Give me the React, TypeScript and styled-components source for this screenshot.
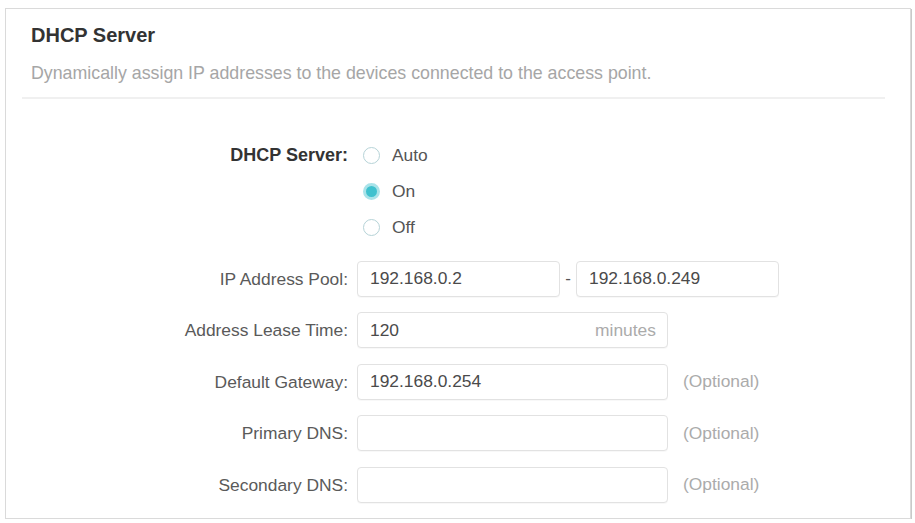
import React from "react";
import styled, { createGlobalStyle } from "styled-components";

const GlobalStyle = createGlobalStyle`
  html, body {
    margin: 0;
    padding: 0;
    background: #ffffff;
  }
  body {
    font-family: "Liberation Sans", Arial, sans-serif;
  }
  * { box-sizing: border-box; }
`;

const Page = styled.div`
  padding: 8px 4px 0 5px;
`;

const Card = styled.section`
  border: 1px solid #dadada;
  box-shadow: 1px 1px 0 #c9c9c9;
  padding: 14px 0 15px 0;
  background: #fff;
`;

const Title = styled.h2`
  margin: 0 0 0 25px;
  font-size: 20px;
  line-height: 24px;
  font-weight: bold;
  color: #333;
`;

const Description = styled.p`
  margin: 16px 0 0 25px;
  font-size: 17.8px;
  line-height: 20px;
  color: #a6a6a6;
`;

const Divider = styled.div`
  margin: 14px 25px 0 16px;
  height: 2px;
  background: #f0f0f0;
`;

const Form = styled.div`
  display: grid;
  grid-template-columns: 342px auto;
  column-gap: 9px;
  row-gap: 15.5px;
  padding-top: 38px;
`;

const Label = styled.div<{ $bold?: boolean }>`
  text-align: right;
  font-size: ${(p) => (p.$bold ? "18px" : "17.4px")};
  line-height: 36px;
  height: 36px;
  color: ${(p) => (p.$bold ? "#333" : "#5a5a5a")};
  font-weight: ${(p) => (p.$bold ? "bold" : "normal")};
  white-space: nowrap;
`;

const Field = styled.div`
  display: flex;
  align-items: center;
  min-height: 36px;
`;

const Options = styled.div`
  display: flex;
  flex-direction: column;
`;

const Option = styled.label`
  display: flex;
  align-items: center;
  gap: 12px;
  height: 36px;
  padding-left: 6px;
  font-size: 17.4px;
  color: #555;
`;

const Radio = styled.span<{ $checked?: boolean }>`
  display: inline-block;
  width: 17px;
  height: 17px;
  border-radius: 50%;
  border: ${(p) => (p.$checked ? "3px solid #a9e3e9" : "1.5px solid #b6d3d7")};
  background: ${(p) => (p.$checked ? "#3fc1ce" : "#fff")};
`;

const InputBox = styled.div<{ $width: number }>`
  display: flex;
  align-items: center;
  justify-content: space-between;
  width: ${(p) => p.$width}px;
  height: 36px;
  padding: 0 11px 0 12px;
  border: 1px solid #e2e2e2;
  border-radius: 4px;
  box-shadow: 0 1px 1px rgba(0, 0, 0, 0.03);
  background: #fff;
  font-size: 17.4px;
  color: #4a4a4a;
`;

const Suffix = styled.span`
  color: #ababab;
`;

const Dash = styled.span`
  width: 16px;
  text-align: center;
  font-size: 17px;
  color: #555;
`;

const Hint = styled.span`
  margin-left: 15px;
  font-size: 17.4px;
  color: #ababab;
`;

export default function App() {
  return (
    <>
      <GlobalStyle />
      <Page>
        <Card>
          <Title>DHCP Server</Title>
          <Description>
            Dynamically assign IP addresses to the devices connected to the access point.
          </Description>
          <Divider />
          <Form>
            <Label $bold>DHCP Server:</Label>
            <Options>
              <Option>
                <Radio />
                Auto
              </Option>
              <Option>
                <Radio $checked />
                On
              </Option>
              <Option>
                <Radio />
                Off
              </Option>
            </Options>

            <Label>IP Address Pool:</Label>
            <Field>
              <InputBox $width={203}>192.168.0.2</InputBox>
              <Dash>-</Dash>
              <InputBox $width={203}>192.168.0.249</InputBox>
            </Field>

            <Label>Address Lease Time:</Label>
            <Field>
              <InputBox $width={311}>
                <span>120</span>
                <Suffix>minutes</Suffix>
              </InputBox>
            </Field>

            <Label>Default Gateway:</Label>
            <Field>
              <InputBox $width={311}>192.168.0.254</InputBox>
              <Hint>(Optional)</Hint>
            </Field>

            <Label>Primary DNS:</Label>
            <Field>
              <InputBox $width={311} />
              <Hint>(Optional)</Hint>
            </Field>

            <Label>Secondary DNS:</Label>
            <Field>
              <InputBox $width={311} />
              <Hint>(Optional)</Hint>
            </Field>
          </Form>
        </Card>
      </Page>
    </>
  );
}
